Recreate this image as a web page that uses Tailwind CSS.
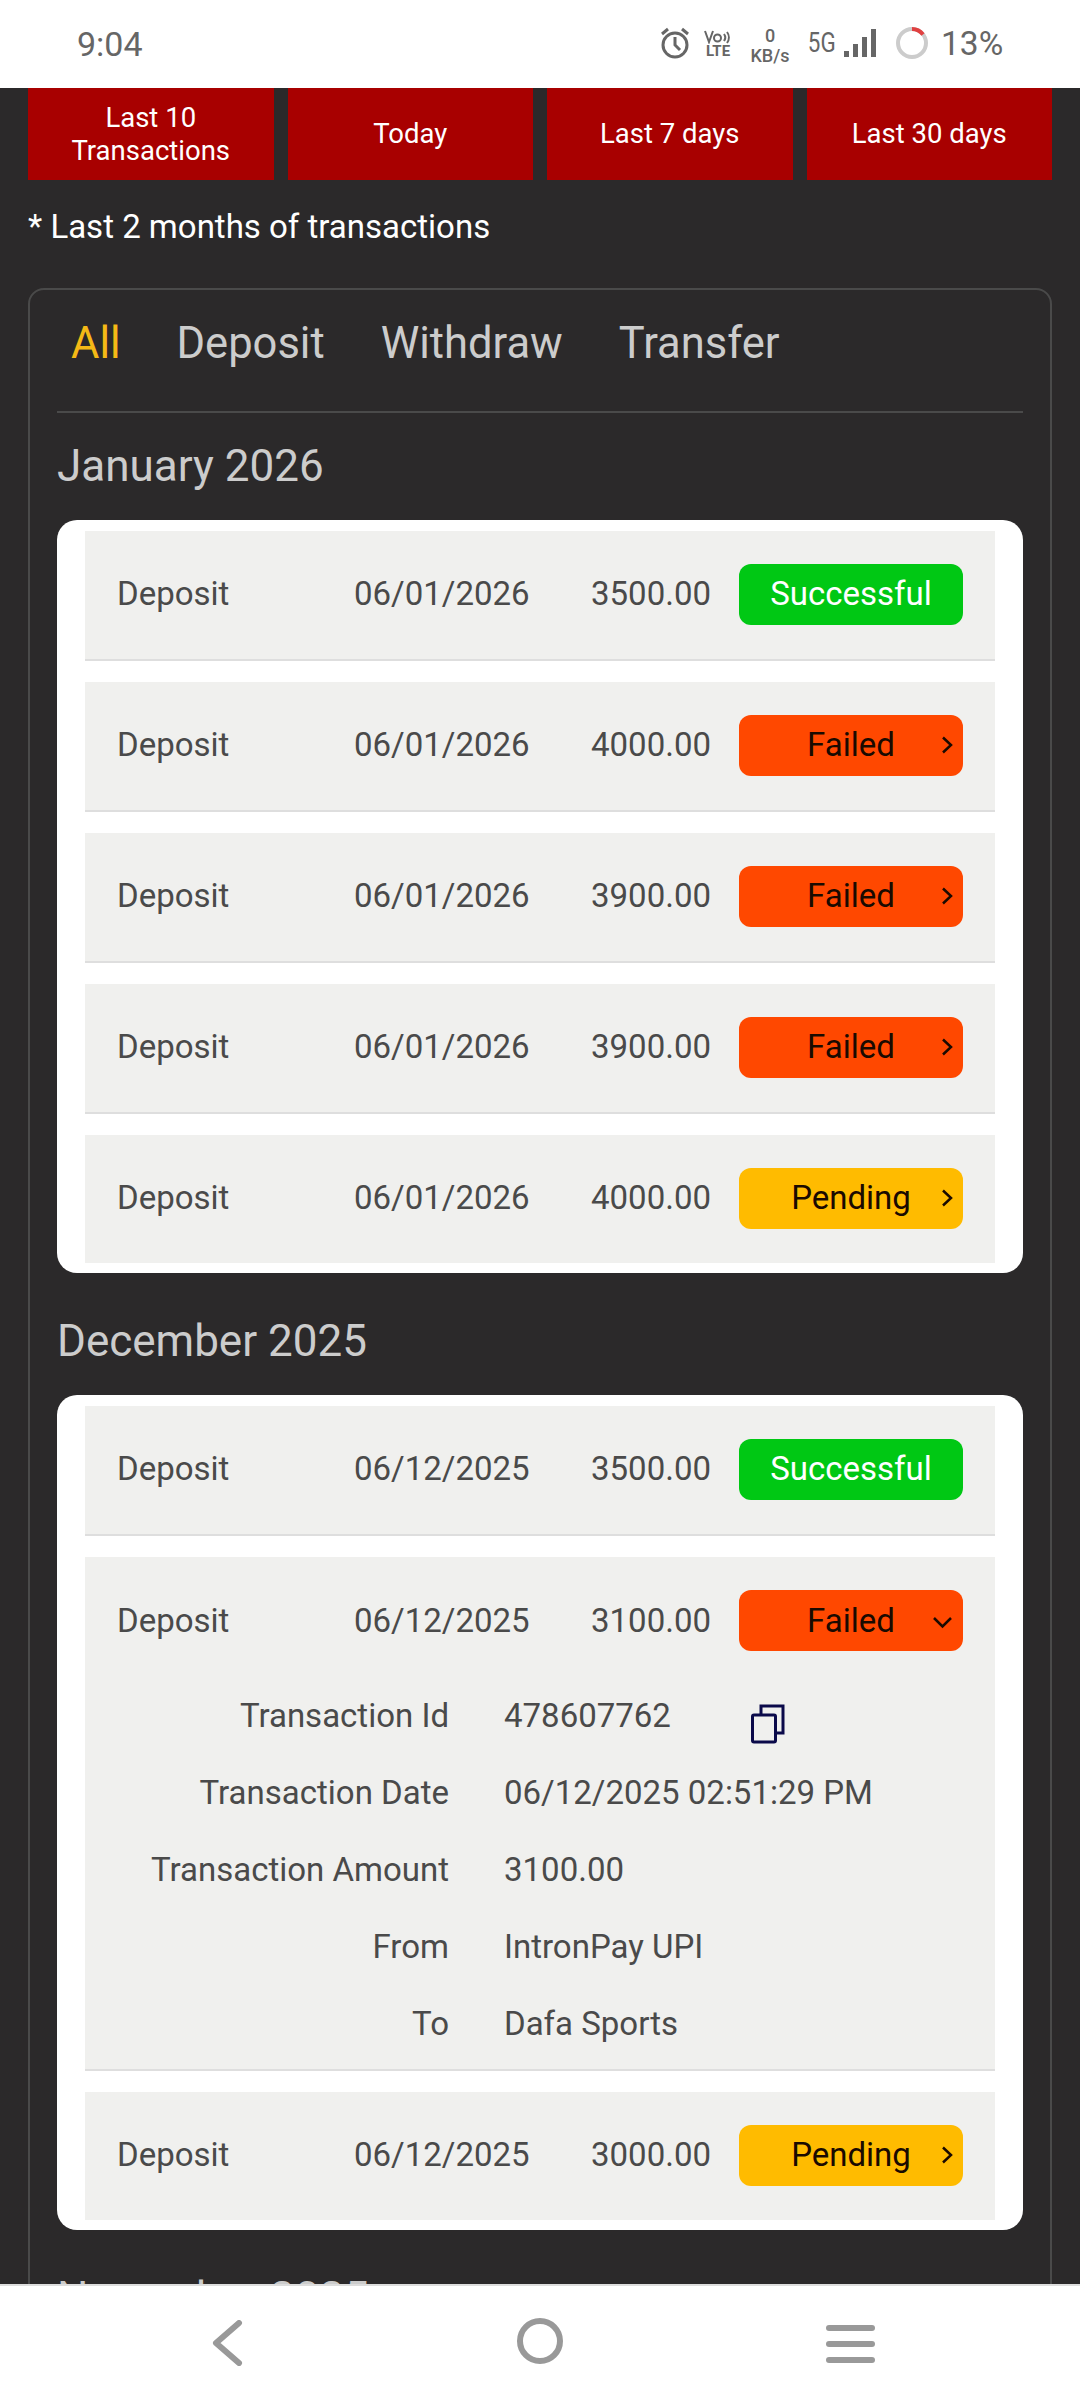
<!DOCTYPE html>
<html lang="en">
<head>
    <meta charset="UTF-8">
    <meta name="viewport" content="width=device-width, initial-scale=1.0">
    <title>Transactions</title>
    <script src="https://cdn.jsdelivr.net/npm/@tailwindcss/browser@4"></script>
</head>
<body class="bg-[#2b292a] font-['Roboto',sans-serif]">
<div class="flex flex-col h-[2400px] w-[1080px] overflow-hidden">

    <!-- Status bar -->
    <div class="h-[88px] shrink-0 bg-white flex items-center text-[#666666] pl-[77px]">
        <span class="text-[34px] leading-none w-[66px]">9:04</span>
        <svg class="ml-[516px] mt-[-2px]" width="32" height="32" viewBox="0 0 32 32" fill="none" stroke="#666666" stroke-width="3">
            <circle cx="16" cy="18" r="12"/><path d="M16 10v8l5 5M3 7l6-5M29 7l-6-5"/>
        </svg>
        <div class="ml-[13px] w-[28px] flex flex-col items-center mt-[-1px]">
            <svg width="28" height="15" viewBox="0 0 28 15" fill="none" stroke="#666666" stroke-width="2">
                <path d="M1 2l4 11 4-11"/><circle cx="13.500" cy="9" r="3.500"/><path d="M20 5a6 6 0 0 1 0 7M23 3a9 9 0 0 1 0 11"/>
            </svg>
            <span class="text-[15px] leading-[14px] font-bold">LTE</span>
        </div>
        <div class="ml-[16px] w-[44px] flex flex-col items-center text-[18px] leading-[20px] font-medium mt-[3px]">
            <span>0</span><span>KB/s</span>
        </div>
        <span class="ml-[13px] text-[28px] leading-none scale-x-[.8] w-[28px] mt-[-2px]">5G</span>
        <svg class="ml-[11px] mt-[-3px]" width="32" height="28" viewBox="0 0 32 28" fill="#666666">
            <rect x="0" y="22" width="5" height="6"/><rect x="9" y="15" width="5" height="13"/><rect x="18" y="8" width="5" height="20"/><rect x="27" y="0" width="5" height="28"/>
        </svg>
        <svg class="ml-[19px] mt-[-2px]" width="34" height="34" viewBox="0 0 34 34" fill="none" stroke-width="4">
            <circle cx="17" cy="17" r="14" stroke="#cccccc"/><path d="M17 3a14 14 0 0 1 11 5.500" stroke="#e04040"/>
        </svg>
        <span class="ml-[12px] text-[33.500px] leading-none">13%</span>
    </div>

    <!-- Page -->
    <div class="flex-1 overflow-hidden px-[28px]">
        <div class="flex gap-[14px] h-[92px]">
            <button class="flex-1 bg-[#a80000] text-white text-[27.5px] leading-[33px]">Last 10<br>Transactions</button>
            <button class="flex-1 bg-[#a80000] text-white text-[27.5px]">Today</button>
            <button class="flex-1 bg-[#a80000] text-white text-[27.5px]">Last 7 days</button>
            <button class="flex-1 bg-[#a80000] text-white text-[27.5px]">Last 30 days</button>
        </div>
        <p class="text-white text-[33px] leading-[40px] mt-[27px] mb-[41px]">* Last 2 months of transactions</p>

        <div class="border-2 border-[#4a4a4a] rounded-[16px] px-[27px] h-[2200px]">
            <div class="flex gap-[56px] pl-[14px] h-[123px] items-center border-b-2 border-[#4a4a4a] text-[43.5px] text-[#cccccc] pb-[14px]">
                <span class="text-[#f5b916]">All</span>
                <span>Deposit</span>
                <span>Withdraw</span>
                <span>Transfer</span>
            </div>

            <div id="months"></div>
        </div>
    </div>

    <!-- Bottom nav -->
    <div class="h-[116px] shrink-0 bg-white border-t-2 border-[#dddddd] relative z-10">
        <svg class="absolute left-[210px] top-[34px]" width="34" height="46" viewBox="0 0 34 46" fill="none" stroke="#999999" stroke-width="6" stroke-linecap="round" stroke-linejoin="round">
            <path d="M29 3L6 23l23 20"/>
        </svg>
        <svg class="absolute left-[516px] top-[31px]" width="48" height="48" viewBox="0 0 48 48" fill="none" stroke="#999999" stroke-width="6">
            <circle cx="24" cy="24" r="20"/>
        </svg>
        <svg class="absolute left-[826px] top-[39px]" width="49" height="38" viewBox="0 0 49 38" fill="#999999">
            <rect y="0" width="49" height="6" rx="3"/><rect y="16" width="49" height="6" rx="3"/><rect y="32" width="49" height="6" rx="3"/>
        </svg>
    </div>
</div>

<script>
    const months = [
        { name: "January 2026", rows: [
            ["06/01/2026", "3500.00", "ok"],
            ["06/01/2026", "4000.00", "fail"],
            ["06/01/2026", "3900.00", "fail"],
            ["06/01/2026", "3900.00", "fail"],
            ["06/01/2026", "4000.00", "pending"]
        ]},
        { name: "December 2025", rows: [
            ["06/12/2025", "3500.00", "ok"],
            ["06/12/2025", "3100.00", "fail", true],
            ["06/12/2025", "3000.00", "pending"]
        ]},
        { name: "November 2025", rows: [] }
    ];

    const chevronRight = `<svg class="absolute right-[10px] top-[20px]" width="12" height="20" viewBox="0 0 12 20" fill="none" stroke="#1a0a00" stroke-width="2.500"><path d="M2 2.500l8 7.500-8 7.500"/></svg>`;
    const chevronDown = `<svg class="absolute right-[10px] top-[26px]" width="21" height="13" viewBox="0 0 21 13" fill="none" stroke="#1a0a00" stroke-width="2.500"><path d="M2 2l8.500 8.500L19 2"/></svg>`;

    function pill(status, open) {
        if (status === "ok") {
            return `<div class="relative w-[224px] h-[61px] rounded-[12px] bg-[#00c814] text-white flex items-center justify-center">Successful</div>`;
        }
        const chevron = open ? chevronDown : chevronRight;
        if (status === "fail") {
            return `<div class="relative w-[224px] h-[61px] rounded-[12px] bg-[#ff4800] text-[#1a0a00] flex items-center justify-center">Failed${chevron}</div>`;
        }
        return `<div class="relative w-[224px] h-[61px] rounded-[12px] bg-[#ffbb00] text-[#1a0a00] flex items-center justify-center">Pending${chevron}</div>`;
    }

    const copyIcon = `<svg class="ml-[80px] mt-[16px]" width="34" height="40" viewBox="0 0 34 40" fill="none" stroke="#0b0a4a" stroke-width="3"><rect x="1.500" y="11" width="23" height="27" rx="1.500"/><path d="M10 11V2h22v27h-7"/></svg>`;

    function detail(label, value, extra) {
        return `<div class="flex items-center h-[77px]">
            <div class="w-[364px] text-right">${label}</div>
            <div class="ml-[55px]">${value}</div>${extra || ""}
        </div>`;
    }

    function row(r) {
        const head = `<div class="flex items-center pl-[32px] ${r[3] ? "h-[120px] pt-[7px]" : "h-[128px] pb-[2px]"}">
            <div class="w-[237px]">Deposit</div>
            <div class="w-[237px]">${r[0]}</div>
            <div class="w-[148px]">${r[1]}</div>
            ${pill(r[2], r[3])}
        </div>`;
        const body = r[3] ? `<div class="pb-[7px]">
            ${detail("Transaction Id", "478607762", copyIcon)}
            ${detail("Transaction Date", "06/12/2025 02:51:29 PM")}
            ${detail("Transaction Amount", "3100.00")}
            ${detail("From", "IntronPay UPI")}
            ${detail("To", "Dafa Sports")}
        </div>` : "";
        return `<div class="bg-[#f0f0ee] border-b-2 border-[#dedede] last:border-b-0 text-[33px] text-[#4a4a4a]">${head}${body}</div>`;
    }

    document.getElementById("months").innerHTML = months.map(m => `
        <h2 class="text-[44px] leading-[56px] text-[#cccccc] mt-[25px] mb-[26px]">${m.name}</h2>
        ${m.rows.length ? `<div class="bg-white rounded-[20px] px-[28px] pt-[11px] pb-[10px] mb-[40px] flex flex-col gap-[21px]">${m.rows.map(row).join("")}</div>` : ""}
    `).join("");
</script>
</body>
</html>
